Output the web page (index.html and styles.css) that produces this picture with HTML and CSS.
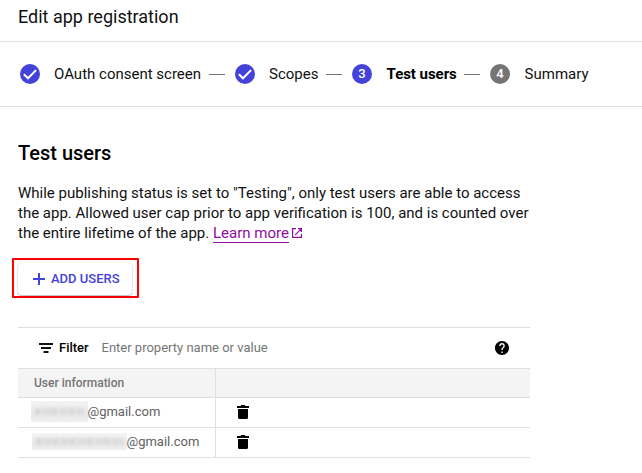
FILE: index.html
```
<!DOCTYPE html>
<html lang="en">
<head>
<meta charset="utf-8">
<title>Edit app registration</title>
<link rel="stylesheet" href="styles.css">
</head>
<body>
<header class="page-header"><h1>Edit app registration</h1></header>
<nav class="stepper">
  <div class="step"><svg class="badge" viewBox="0 0 20 20"><circle cx="10" cy="10" r="10" fill="#4343d9"/><path d="M3.8 10.2l4.2 4.1 8.1-8.2" fill="none" stroke="#fff" stroke-width="2"/></svg><span>OAuth consent screen</span></div>
  <i class="dash"></i>
  <div class="step"><svg class="badge" viewBox="0 0 20 20"><circle cx="10" cy="10" r="10" fill="#4343d9"/><path d="M3.8 10.2l4.2 4.1 8.1-8.2" fill="none" stroke="#fff" stroke-width="2"/></svg><span>Scopes</span></div>
  <i class="dash"></i>
  <div class="step wide current"><b class="badge number">3</b><span>Test users</span></div>
  <i class="dash"></i>
  <div class="step wide"><b class="badge number pending">4</b><span>Summary</span></div>
</nav>
<main>
  <h2>Test users</h2>
  <p class="intro">While publishing status is set to "Testing", only test users are able to access<br>the app. Allowed user cap prior to app verification is 100, and is counted over<br>the entire lifetime of the app. <a class="learn">Learn more</a><svg class="external" viewBox="0 0 10 10"><path d="M4 .6H.6v8.8h8.8V6M6 .6h3.4V4M9.2.8L3.2 6.8" fill="none" stroke="#8e0d9f" stroke-width="1.2"/></svg></p>
  <div class="highlight">
    <button class="add"><svg viewBox="0 0 12 12"><path d="M6 0v12M0 6h12" stroke="#4343d9" stroke-width="2"/></svg><span>ADD USERS</span></button>
  </div>
  <section class="table">
    <div class="filter">
      <svg class="filter-icon" viewBox="0 0 14 10"><path d="M0 1h14M2 5h10M4.500 9h5" stroke="#111" stroke-width="2"/></svg>
      <span class="filter-label">Filter</span>
      <span class="placeholder">Enter property name or value</span>
      <svg class="help" viewBox="2 2 20 20"><path d="M12 2C6.480 2 2 6.480 2 12s4.480 10 10 10 10-4.480 10-10S17.520 2 12 2zm1 17h-2v-2h2v2zm2.070-7.750l-.9.920C13.450 12.900 13 13.500 13 15h-2v-.5c0-1.100.45-2.100 1.170-2.830l1.240-1.260c.37-.36.59-.86.59-1.410 0-1.100-.9-2-2-2s-2 .9-2 2H8c0-2.210 1.790-4 4-4s4 1.790 4 4c0 .88-.36 1.680-.93 2.250z"/></svg>
    </div>
    <div class="row head"><div class="cell">User information</div><div class="cell"></div></div>
    <div class="row entry"><div class="cell"><span class="redacted short"><i></i></span><span>@gmail.com</span></div><div class="cell"><svg class="trash" viewBox="0 0 12 14"><path d="M0 1h3.500l.8-1h3.400l.8 1H12v2H0zM1 4h10v8.500q0 1.500-1.500 1.500h-7Q1 14 1 12.500z"/></svg></div></div>
    <div class="row entry"><div class="cell"><span class="redacted long"><i></i></span><span>@gmail.com</span></div><div class="cell"><svg class="trash" viewBox="0 0 12 14"><path d="M0 1h3.500l.8-1h3.400l.8 1H12v2H0zM1 4h10v8.500q0 1.500-1.500 1.500h-7Q1 14 1 12.500z"/></svg></div></div>
  </section>
</main>
</body>
</html>
```
FILE: styles.css
```
* { box-sizing: border-box; }
body { margin: 0; background: #fff; color: #111; font-family: Roboto, sans-serif; font-size: 15px; }
svg { display: block; flex: none; }
h1, h2, p { margin: 0; }
.page-header { height: 42px; padding: 5px 18px 0; border-bottom: 1px solid #e0e0e0; }
h1 { font-size: 18px; font-weight: 400; line-height: 24px; }
.stepper { display: grid; grid-template-columns: 189px 26px 91px 26px 112px 26px auto; align-items: center; height: 65px; padding-left: 20px; border-bottom: 1px solid #e0e0e0; }
.step { display: flex; align-items: center; gap: 14px; white-space: nowrap; line-height: 20px; }
.wide { gap: 14.6px; }
.badge { width: 20px; height: 20px; flex: none; }
.number { border-radius: 50%; background: #4343d9; color: #fff; font-size: 13px; font-weight: 500; text-align: center; }
.pending { background: #757575; }
.current span { color: #000; font-weight: 700; letter-spacing: -.05px; }
.dash { width: 16px; height: 1px; background: #757575; }
main { padding: 34px 0 0 18px; }
h2 { font-size: 20px; font-weight: 500; line-height: 24px; color: #000; }
.intro { margin-top: 18px; line-height: 20px; white-space: nowrap; }
.learn { color: #8e0d9f; border-bottom: 1px solid #8e0d9f; }
.external { display: inline-block; width: 10px; height: 10px; margin-left: 3px; }
.highlight { width: 127px; height: 40px; margin: 15px 0 0 -6px; padding: 3px 4px; border: 2px solid #f00; border-radius: 1px; }
.add { display: flex; align-items: center; gap: 6px; width: 114px; height: 32px; padding: 0 0 0 15px; border: 0; border-radius: 4px; background: #fff; box-shadow: 0 1px 2px rgba(0,0,0,.28), 0 0 2px rgba(0,0,0,.1); color: #4343d9; font: 500 13px/20px Roboto, sans-serif; white-space: nowrap; }
.add svg { width: 12px; height: 12px; }
.table { width: 512px; margin-top: 29px; border-top: 1px solid #dfdfdf; font-size: 13px; }
.filter { display: flex; align-items: center; height: 40px; padding: 0 21px; }
.filter span { padding-bottom: 2px; }
.filter-icon { width: 14px; height: 10px; }
.filter-label { width: 42.5px; margin-left: 6px; color: #000; font-weight: 500; }
.placeholder { color: #757575; }
.help { width: 14px; height: 14px; margin-left: auto; }
.row { display: grid; grid-template-columns: 197px 1fr; height: 30px; border-bottom: 1px solid #dfdfdf; }
.cell { display: flex; align-items: center; color: #616161; white-space: nowrap; }
.cell + .cell { border-left: 1px solid #dfdfdf; padding-left: 21px; }
.entry .cell { padding-bottom: 2px; }
.head { border-top: 1px solid #dfdfdf; background: #f4f4f4; font-size: 12px; font-weight: 500; }
.head .cell:first-child { padding-left: 16px; color: #757575; }
.redacted { display: flex; align-items: center; flex: none; background: linear-gradient(#f4f4f4, #e8e8e8 60%, #f0f0f0); }
.redacted i { width: 100%; height: 7px; margin: 0 4px; background: repeating-linear-gradient(90deg, #d8d8d8 0 5px, #e4e4e4 5px 8px, #dcdcdc 8px 15px, #e2e2e2 15px 17px); filter: blur(1.8px); }
.short { width: 56.5px; height: 21px; margin-left: 13px; }
.long { width: 94.5px; height: 17px; margin-left: 14px; }
.trash { width: 12px; height: 14px; fill: #000; }
```
